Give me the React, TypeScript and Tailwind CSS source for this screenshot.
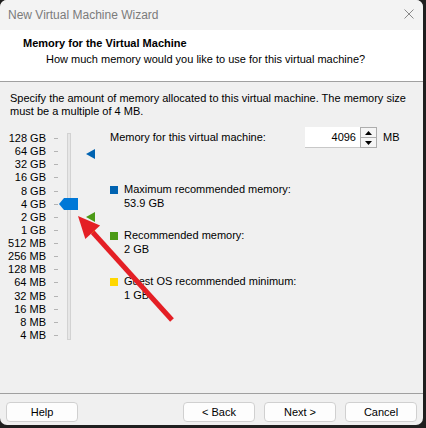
import React from 'react';

const sizes = [
    '128 GB', '64 GB', '32 GB', '16 GB', '8 GB', '4 GB', '2 GB', '1 GB',
    '512 MB', '256 MB', '128 MB', '64 MB', '32 MB', '16 MB', '8 MB', '4 MB',
];

const Legend: React.FC<{ color: string; label: string; value: string }> = ({ color, label, value }) => (
    <div className="flex gap-[6px]">
        <div className={`mt-[4px] h-[8px] w-[8px] ${color}`} />
        <div className="flex flex-col leading-[14px]">
            <span>{label}</span>
            <span>{value}</span>
        </div>
    </div>
);

const Button: React.FC<{ children: React.ReactNode }> = ({ children }) => (
    <button className="h-[20px] w-[72px] rounded-[4px] border border-[#d0d0d0] bg-[#fdfdfd] text-[11px] text-black">
        {children}
    </button>
);

const App: React.FC = () => {
    return (
        <div className="h-[428px] w-[426px] bg-[#1f1f1f]" style={{ fontFamily: '"Liberation Sans", Arial, sans-serif' }}>
            <div className="relative flex h-[425px] w-[423px] flex-col overflow-hidden rounded-[7px] bg-[#f0f0f0] text-[11px] text-black">
                {/* title bar */}
                <div className="flex h-[30px] items-center justify-between bg-[#f3f3f3] pl-[8px] pr-[9px]">
                    <span className="text-[12px] text-[#7b7b7b]">New Virtual Machine Wizard</span>
                    <svg width="10" height="10" viewBox="0 0 10 10" className="mb-[2px]">
                        <path d="M0.5 0.5 L9.5 9.5 M9.5 0.5 L0.5 9.5" stroke="#8a8a8a" strokeWidth="1" />
                    </svg>
                </div>

                {/* header */}
                <div className="h-[52px] border-b border-[#a0a0a0] bg-white pl-[23px] pt-[7px] leading-[13px]">
                    <div className="font-bold">Memory for the Virtual Machine</div>
                    <div className="mt-[3px] pl-[23px]">How much memory would you like to use for this virtual machine?</div>
                </div>

                {/* body */}
                <div className="h-[311px] pl-[10px] pt-[10px]">
                    <p className="leading-[13px]">
                        Specify the amount of memory allocated to this virtual machine. The memory size must be a multiple of 4 MB.
                    </p>

                    <div className="mt-[9px] flex">
                        {/* slider */}
                        <div className="relative -ml-[6px] flex w-[106px] pt-[5px]">
                            <div className="flex flex-col">
                                {sizes.map((s) => (
                                    <div key={s} className="flex h-[13.13px] items-center">
                                        <span className="w-[42px] whitespace-nowrap text-right leading-[13px]">{s}</span>
                                        <span className="ml-[8px] h-px w-[4px] bg-[#b4b4b4]" />
                                    </div>
                                ))}
                            </div>
                            <div className="mb-[2px] ml-[9px] mt-[1px] w-[4px] border border-[#d2d2d2] bg-[#e6e6e6]" />

                            {/* thumb at 4 GB */}
                            <svg width="20" height="12" viewBox="0 0 20 12" className="absolute left-[55px] top-[71px]">
                                <path d="M0 6 L5 0 H19 V12 H5 Z" fill="#0078d7" />
                            </svg>
                            {/* maximum recommended */}
                            <svg width="9" height="10" viewBox="0 0 9 10" className="absolute left-[82px] top-[22px]">
                                <path d="M0 5 L9 0 V10 Z" fill="#0063b1" />
                            </svg>
                            {/* recommended */}
                            <svg width="9" height="10" viewBox="0 0 9 10" className="absolute left-[82px] top-[85px]">
                                <path d="M0 5 L9 0 V10 Z" fill="#4b9a15" />
                            </svg>
                            {/* guest minimum */}
                            <svg width="9" height="10" viewBox="0 0 9 10" className="absolute left-[82px] top-[98px]">
                                <path d="M0 5 L9 0 V10 Z" fill="#ffd700" />
                            </svg>
                        </div>

                        {/* right column */}
                        <div className="flex flex-col">
                            <div className="flex h-[21px] items-center">
                                <span className="w-[195px]">Memory for this virtual machine:</span>
                                <div className="flex h-[21px] w-[55px] items-center justify-end border-b border-[#c8c8c8] bg-white pr-[4px]">
                                    4096
                                </div>
                                <div className="flex h-[21px] w-[17px] flex-col border border-[#adadad] bg-[#f5f5f5]">
                                    <div className="flex flex-1 items-center justify-center border-b border-[#adadad]">
                                        <svg width="7" height="4" viewBox="0 0 7 4">
                                            <path d="M0 4 L3.5 0 L7 4 Z" fill="#000" />
                                        </svg>
                                    </div>
                                    <div className="flex flex-1 items-center justify-center">
                                        <svg width="7" height="4" viewBox="0 0 7 4">
                                            <path d="M0 0 L3.5 4 L7 0 Z" fill="#000" />
                                        </svg>
                                    </div>
                                </div>
                                <span className="ml-[6px]">MB</span>
                            </div>

                            <div className="mt-[34px] flex flex-col gap-[18px]">
                                <Legend color="bg-[#0063b1]" label="Maximum recommended memory:" value="53.9 GB" />
                                <Legend color="bg-[#4b9a15]" label="Recommended memory:" value="2 GB" />
                                <Legend color="bg-[#ffd700]" label="Guest OS recommended minimum:" value="1 GB" />
                            </div>
                        </div>
                    </div>
                </div>

                {/* footer */}
                <div className="flex flex-1 items-start border-t border-[#a0a0a0] pl-[6px] pt-[8px]">
                    <Button>Help</Button>
                    <div className="ml-[105px] flex gap-[9px]">
                        <Button>&lt; Back</Button>
                        <Button>Next &gt;</Button>
                        <Button>Cancel</Button>
                    </div>
                </div>

                {/* red annotation arrow */}
                <svg width="423" height="425" className="pointer-events-none absolute left-0 top-0">
                    <line x1="92.7" y1="232.3" x2="172" y2="320" stroke="#e41f25" strokeWidth="5" />
                    <path d="M78 216 L100.1 225.6 L85.3 239 Z" fill="#e41f25" />
                </svg>
            </div>
        </div>
    );
};

export default App;
